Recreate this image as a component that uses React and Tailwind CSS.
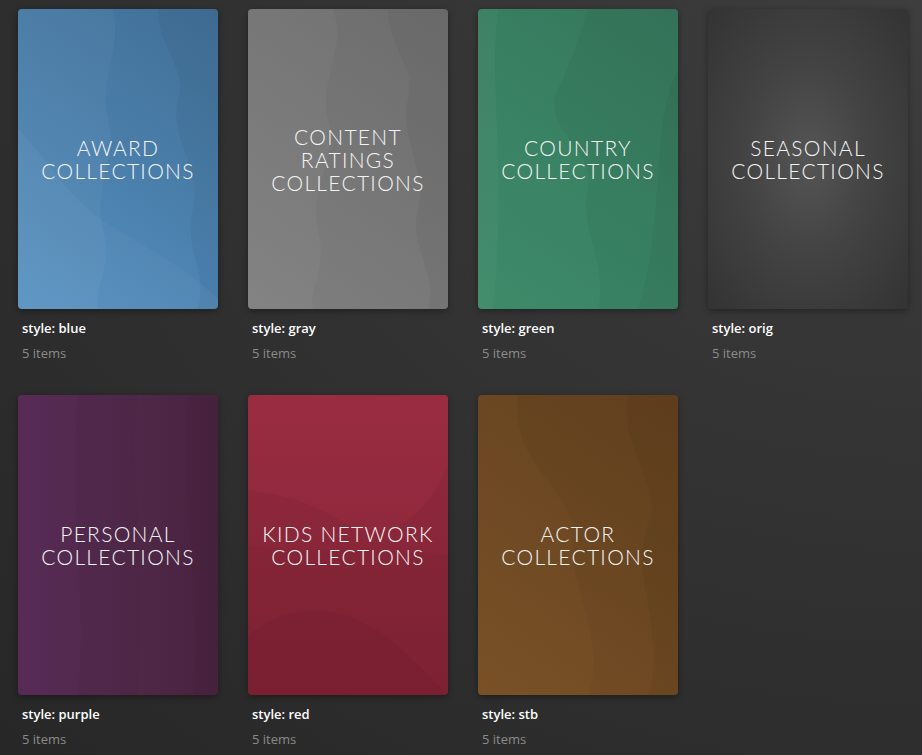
import React from "react";

const collections = [
  {
    title: ["AWARD", "COLLECTIONS"],
    style: "blue",
    bg: "bg-[linear-gradient(35deg,#5691c1_0%,#4a7fab_50%,#416f96_100%)]",
    waves: [
      { d: "M0 0 H95 C105 40 80 70 90 110 C100 150 75 180 85 220 C95 260 75 280 80 300 H0 Z", fill: "rgba(255,255,255,0.035)" },
      { d: "M140 0 H200 V300 H180 C190 260 165 240 175 200 C185 160 150 130 160 90 C170 60 140 40 140 0 Z", fill: "rgba(0,0,0,0.04)" },
      { d: "M0 120 C30 150 50 190 90 215 C130 240 170 260 200 290 V300 H0 Z", fill: "rgba(255,255,255,0.03)" },
    ],
  },
  {
    title: ["CONTENT", "RATINGS", "COLLECTIONS"],
    style: "gray",
    bg: "bg-[linear-gradient(35deg,#7f7f7f_0%,#767676_50%,#6d6d6d_100%)]",
    waves: [
      { d: "M0 0 H85 C100 40 70 70 80 110 C90 150 60 180 70 220 C80 260 60 280 65 300 H0 Z", fill: "rgba(255,255,255,0.03)" },
      { d: "M140 0 H200 V300 H180 C190 260 160 240 170 200 C180 160 150 130 160 90 C170 60 140 40 140 0 Z", fill: "rgba(0,0,0,0.035)" },
    ],
  },
  {
    title: ["COUNTRY", "COLLECTIONS"],
    style: "green",
    bg: "bg-[linear-gradient(35deg,#3d8a69_0%,#3a8264_50%,#35775c_100%)]",
    waves: [
      { d: "M0 0 H20 C10 80 30 160 15 300 H0 Z", fill: "rgba(255,255,255,0.03)" },
      { d: "M110 0 H200 V300 H120 C130 250 100 220 110 180 C120 140 60 120 80 80 C95 50 100 30 110 0 Z", fill: "rgba(0,0,0,0.035)" },
      { d: "M200 60 C170 120 190 200 160 300 H200 Z", fill: "rgba(0,0,0,0.035)" },
    ],
  },
  {
    title: ["SEASONAL", "COLLECTIONS"],
    style: "orig",
    bg: "bg-[radial-gradient(ellipse_at_center,#555555_0%,#434343_45%,#333333_100%)]",
    waves: [],
  },
  {
    title: ["PERSONAL", "COLLECTIONS"],
    style: "purple",
    bg: "bg-[linear-gradient(90deg,#572b56_0%,#502849_55%,#48223f_100%)]",
    waves: [
      { d: "M60 0 H120 C110 80 130 160 120 300 H60 C70 200 50 120 60 0 Z", fill: "rgba(0,0,0,0.015)" },
      { d: "M170 0 H200 V300 H175 C185 200 160 100 170 0 Z", fill: "rgba(0,0,0,0.02)" },
    ],
  },
  {
    title: ["KIDS NETWORK", "COLLECTIONS"],
    style: "red",
    bg: "bg-[linear-gradient(180deg,#9a2c41_0%,#8f283c_50%,#862438_100%)]",
    waves: [
      { d: "M0 95 C40 100 70 110 100 130 C140 150 180 120 200 70 V300 H0 Z", fill: "rgba(0,0,0,0.04)" },
      { d: "M0 150 C60 160 120 150 200 160 V300 H0 Z", fill: "rgba(0,0,0,0.025)" },
      { d: "M0 240 C50 200 110 210 160 260 C180 280 190 290 200 300 H0 Z", fill: "rgba(0,0,0,0.03)" },
    ],
  },
  {
    title: ["ACTOR", "COLLECTIONS"],
    style: "stb",
    bg: "bg-[linear-gradient(35deg,#7a5127_0%,#6e4923_50%,#654320_100%)]",
    waves: [
      { d: "M40 0 H200 V300 H110 C130 240 90 200 95 140 C100 100 30 70 40 0 Z", fill: "rgba(0,0,0,0.03)" },
      { d: "M150 0 H200 V300 H170 C190 240 150 180 170 130 C185 90 140 50 150 0 Z", fill: "rgba(0,0,0,0.04)" },
    ],
  },
];

function Poster({ item }) {
  return (
    <div className={`relative w-[200px] h-[300px] rounded-[4px] overflow-hidden shadow-[0_2px_6px_rgba(0,0,0,0.35)] ${item.bg}`}>
      <svg className="absolute inset-0" width="200" height="300" viewBox="0 0 200 300">
        {item.waves.map((w, i) => (
          <path key={i} d={w.d} fill={w.fill} />
        ))}
      </svg>
      <div className="relative h-full flex flex-col items-center justify-center text-[#f4f4f4] font-['Lato',sans-serif] font-light text-[21px] leading-[23px] tracking-[1.3px] text-center">
        {item.title.map((line) => (
          <span key={line}>{line}</span>
        ))}
      </div>
    </div>
  );
}

export default function App() {
  return (
    <div className="w-[922px] h-[755px] overflow-hidden bg-[radial-gradient(ellipse_at_100%_0%,#3e3e3e_0%,#333333_45%,#272727_100%)] font-['Open_Sans',sans-serif]">
      <div className="grid grid-cols-[repeat(4,200px)] gap-x-[30px] gap-y-[33px] pl-[18px] pt-[9px]">
        {collections.map((item) => (
          <div key={item.style} className="flex flex-col">
            <Poster item={item} />
            <div className="px-[4px] pt-[10px]">
              <div className="text-[13px] leading-[18px] font-semibold text-white">style: {item.style}</div>
              <div className="mt-[7px] text-[13px] leading-[18px] text-[#8b8b8b]">5 items</div>
            </div>
          </div>
        ))}
      </div>
    </div>
  );
}
